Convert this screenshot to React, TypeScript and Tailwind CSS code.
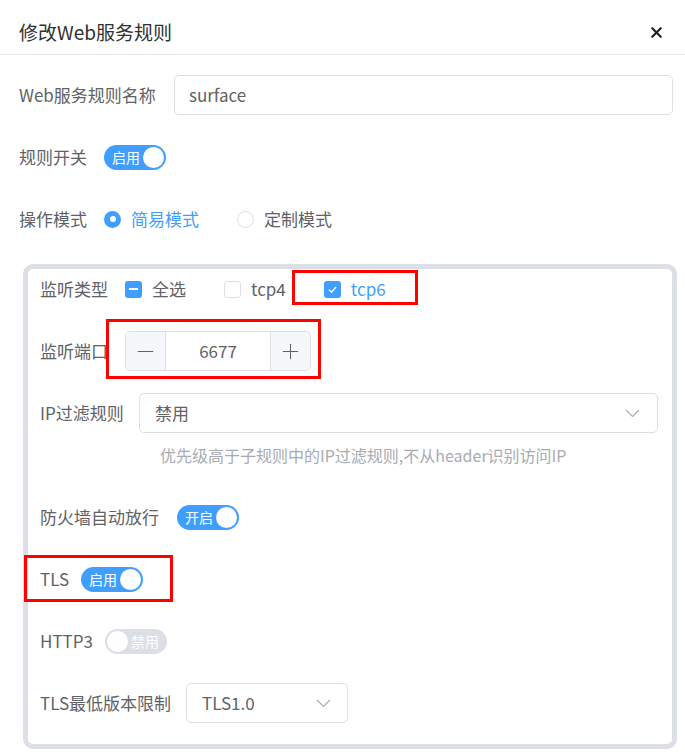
import { Minus, Plus, X } from "lucide-react";

const FONT = "font-['Noto_Sans_CJK_SC','Noto_Sans',sans-serif]";

function Toggle({ on, text }: { on: boolean; text: string }) {
  if (on) {
    return (
      <span className="flex h-[25px] w-[62px] items-center justify-between rounded-full bg-[#409eff] pl-[8px] pr-[2px]">
        <span className="text-[14px] leading-none text-white">{text}</span>
        <span className="h-[21px] w-[21px] rounded-full bg-white" />
      </span>
    );
  }
  return (
    <span className="flex h-[25px] w-[62px] items-center justify-between rounded-full bg-[#dcdfe6] pl-[2px] pr-[8px]">
      <span className="h-[21px] w-[21px] rounded-full bg-white" />
      <span className="text-[14px] leading-none text-white">{text}</span>
    </span>
  );
}

function Checkbox({ state }: { state: "on" | "off" | "half" }) {
  if (state === "off") {
    return <span className="block h-[17px] w-[17px] rounded-[3px] border border-[#dcdfe6] bg-white" />;
  }
  return (
    <span className="flex h-[17px] w-[17px] items-center justify-center rounded-[3px] bg-[#409eff]">
      {state === "half" ? (
        <span className="h-[2px] w-[9px] bg-white" />
      ) : (
        <svg width="11" height="11" viewBox="0 0 11 11" fill="none">
          <path d="M2 5.8 L4.5 8.2 L9 3" stroke="white" strokeWidth="1.4" />
        </svg>
      )}
    </span>
  );
}

function Radio({ on }: { on: boolean }) {
  return on ? (
    <span className="flex h-[17px] w-[17px] items-center justify-center rounded-full bg-[#409eff]">
      <span className="h-[6px] w-[6px] rounded-full bg-white" />
    </span>
  ) : (
    <span className="block h-[17px] w-[17px] rounded-full border border-[#dcdfe6] bg-white" />
  );
}

function Chevron() {
  return (
    <svg width="15" height="9" viewBox="0 0 15 9" fill="none">
      <path d="M1 1 L7.5 7.5 L14 1" stroke="#a8abb2" strokeWidth="1.1" />
    </svg>
  );
}

function Row({
  label,
  labelW,
  children,
  className = "mb-[22px]",
}: {
  label: string;
  labelW: string;
  children: React.ReactNode;
  className?: string;
}) {
  return (
    <div className={`flex h-10 items-center ${className}`}>
      <span className={`${labelW} shrink-0 whitespace-nowrap text-[17px] text-[#606266]`}>{label}</span>
      {children}
    </div>
  );
}

export default function App() {
  return (
    <div className={`relative h-[752px] w-[685px] overflow-hidden bg-white ${FONT}`}>
      {/* header */}
      <div className="flex h-[55px] items-center justify-between border-b border-[#e4e7ed] pl-[19px] pr-[20px] pt-[10px]">
        <span className="text-[19px] text-[#303133]">修改Web服务规则</span>
        <X className="h-[17px] w-[17px] text-[#1f1f1f]" strokeWidth={3} />
      </div>

      <div className="pl-[19px] pt-[20px]">
        <Row label="Web服务规则名称" labelW="w-[155px]">
          <div className="flex h-10 w-[499px] items-center rounded-[5px] border border-[#dcdfe6] px-[14px] text-[17px] text-[#606266]">
            surface
          </div>
        </Row>

        <Row label="规则开关" labelW="w-[85px]">
          <Toggle on text="启用" />
        </Row>

        <Row label="操作模式" labelW="w-[85px]" className="mb-[25px]">
          <div className="flex items-center text-[17px]">
            <Radio on />
            <span className="ml-[10px] text-[#409eff]">简易模式</span>
            <span className="ml-[38px] flex">
              <Radio on={false} />
            </span>
            <span className="ml-[10px] text-[#606266]">定制模式</span>
          </div>
        </Row>

        {/* listener section */}
        <div className="ml-[4px] w-[654px] rounded-[10px] border-[5px] border-[#dcdfe6] pb-[21px] pl-[12px] pr-[14px]">
          <Row label="监听类型" labelW="w-[85px]">
            <div className="flex items-center text-[17px]">
              <Checkbox state="half" />
              <span className="ml-[10px] text-[#606266]">全选</span>
              <span className="ml-[38px] flex">
                <Checkbox state="off" />
              </span>
              <span className="ml-[10px] text-[#606266]">tcp4</span>
              <span className="ml-[38px] flex">
                <Checkbox state="on" />
              </span>
              <span className="ml-[10px] text-[#409eff]">tcp6</span>
            </div>
          </Row>

          <Row label="监听端口" labelW="w-[85px]">
            <div className="flex h-10 w-[186px] overflow-hidden rounded-[5px] border border-[#dcdfe6]">
              <span className="flex w-10 items-center justify-center border-r border-[#dcdfe6] bg-[#f5f7fa]">
                <Minus className="h-[25px] w-[25px] text-[#606266]" strokeWidth={1} />
              </span>
              <span className="flex flex-1 items-center justify-center text-[17px] text-[#606266]">6677</span>
              <span className="flex w-10 items-center justify-center border-l border-[#dcdfe6] bg-[#f5f7fa]">
                <Plus className="h-[25px] w-[25px] text-[#606266]" strokeWidth={1} />
              </span>
            </div>
          </Row>

          <Row label="IP过滤规则" labelW="w-[99px]" className="">
            <div className="flex h-10 flex-1 items-center justify-between rounded-[5px] border border-[#dcdfe6] pl-[15px] pr-[17px] text-[17px] text-[#606266]">
              禁用
              <Chevron />
            </div>
          </Row>
          <div className="mb-[32px] ml-[120px] mt-[12px] whitespace-nowrap text-[16px] leading-[20px] text-[#a8abb2]">
            优先级高于子规则中的IP过滤规则,不从header识别访问IP
          </div>

          <Row label="防火墙自动放行" labelW="w-[137px]">
            <Toggle on text="开启" />
          </Row>

          <Row label="TLS" labelW="w-[41px]">
            <Toggle on text="启用" />
          </Row>

          <Row label="HTTP3" labelW="w-[65px]">
            <Toggle on={false} text="禁用" />
          </Row>

          <Row label="TLS最低版本限制" labelW="w-[146px]" className="">
            <div className="flex h-10 w-[162px] items-center justify-between rounded-[5px] border border-[#dcdfe6] pl-[15px] pr-[16px] text-[17px] text-[#606266]">
              TLS1.0
              <Chevron />
            </div>
          </Row>
        </div>
      </div>

      {/* annotation boxes */}
      <div className="pointer-events-none absolute left-[292px] top-[270px] h-[35px] w-[126px] border-[3px] border-[#ff0000]" />
      <div className="pointer-events-none absolute left-[106px] top-[319px] h-[60px] w-[215px] border-[3px] border-[#ff0000]" />
      <div className="pointer-events-none absolute left-[24px] top-[555px] h-[47px] w-[149px] border-[3px] border-[#ff0000]" />
    </div>
  );
}
